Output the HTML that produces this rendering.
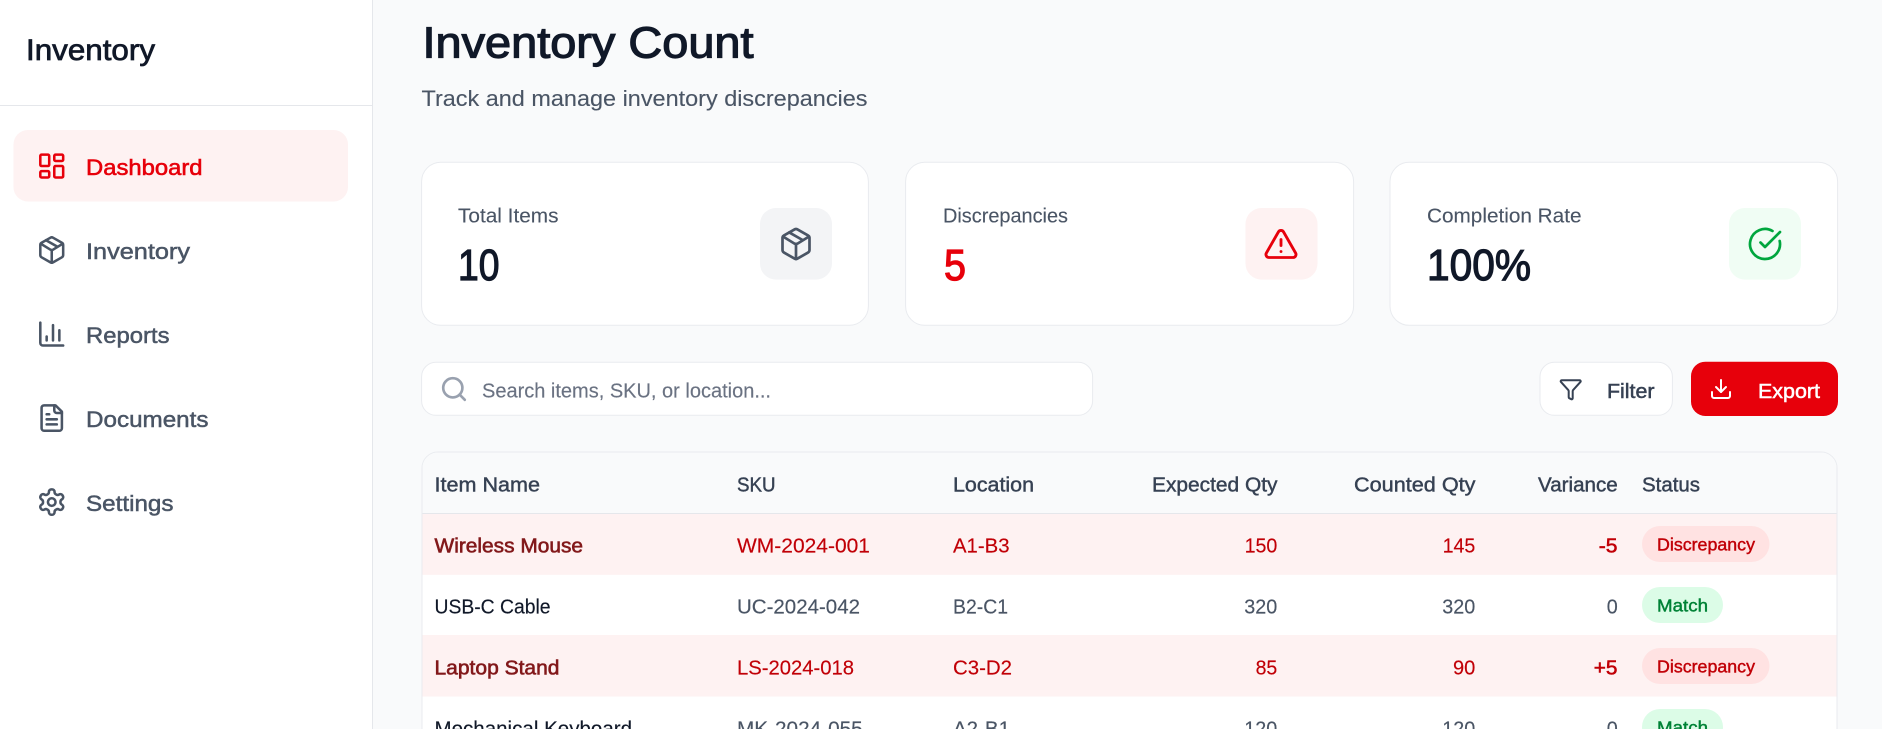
<!DOCTYPE html>
<html lang="en"><head><meta charset="utf-8"><title>Inventory Count</title>
<style>
html,body{margin:0;padding:0;width:1882px;height:729px;overflow:hidden;background:#f9fafb}
svg{display:block}
text{font-family:"Liberation Sans",sans-serif;white-space:pre}
.ic{fill:none;stroke-width:2;stroke-linecap:round;stroke-linejoin:round}
.nav{font-size:22.6px;fill:#4a5565;stroke:#4a5565;stroke-width:.5}
.th{font-size:20.2px;fill:#364153;stroke:#364153;stroke-width:.42}
.td{font-size:20.2px;stroke-width:.15}
.bn{fill:#82181a;stroke:#82181a;stroke-width:.6}
.rd{fill:#c10007;stroke:#c10007}
.gy{fill:#4a5565;stroke:#4a5565}
.dk{fill:#101828;stroke:#101828}
.bd{font-size:17.4px;stroke-width:.42}
.lb{font-size:20.6px;fill:#4a5565;stroke:#4a5565;stroke-width:.12}
.num{font-size:44px;fill:#101828;stroke:#101828;stroke-width:1.2}
</style></head>
<body>
<svg width="1882" height="729" viewBox="0 0 1882 729" xmlns="http://www.w3.org/2000/svg">
<rect width="1882" height="729" fill="#f9fafb"/>
<!-- sidebar -->
<rect x="0" y="0" width="372" height="729" fill="#fff"/>
<rect x="372" y="0" width="1" height="729" fill="#e5e7eb"/>
<rect x="0" y="105" width="372" height="1" fill="#e5e7eb"/>
<text x="26" y="60" font-size="29.5" fill="#101828" stroke="#101828" stroke-width=".75" textLength="129" lengthAdjust="spacingAndGlyphs">Inventory</text>
<rect x="13.5" y="130" width="334.5" height="71.5" rx="14.4" fill="#fef2f2"/>
<g class="ic" stroke="#e7000b" transform="translate(36.5 150.8) scale(1.27)"><rect width="7" height="9" x="3" y="3" rx="1"/><rect width="7" height="5" x="14" y="3" rx="1"/><rect width="7" height="9" x="14" y="12" rx="1"/><rect width="7" height="5" x="3" y="16" rx="1"/></g>
<text x="86" y="175" font-size="22.6" fill="#e7000b" stroke="#e7000b" stroke-width=".6" textLength="116.5" lengthAdjust="spacingAndGlyphs">Dashboard</text>
<g class="ic" stroke="#4a5565" transform="translate(36.5 234.8) scale(1.27)"><path d="M11 21.73a2 2 0 0 0 2 0l7-4A2 2 0 0 0 21 16V8a2 2 0 0 0-1-1.73l-7-4a2 2 0 0 0-2 0l-7 4A2 2 0 0 0 3 8v8a2 2 0 0 0 1 1.73z"/><path d="M12 22V12"/><path d="m3.3 7 7.703 4.734a2 2 0 0 0 1.994 0L20.7 7"/><path d="m7.5 4.27 9 5.15"/></g>
<text class="nav" x="86" y="259" textLength="104" lengthAdjust="spacingAndGlyphs">Inventory</text>
<g class="ic" stroke="#4a5565" transform="translate(36.5 318.8) scale(1.27)"><path d="M3 3v16a2 2 0 0 0 2 2h16"/><path d="M18 17V9"/><path d="M13 17V5"/><path d="M8 17v-3"/></g>
<text class="nav" x="86" y="343" textLength="83.5" lengthAdjust="spacingAndGlyphs">Reports</text>
<g class="ic" stroke="#4a5565" transform="translate(36.5 402.8) scale(1.27)"><path d="M15 2H6a2 2 0 0 0-2 2v16a2 2 0 0 0 2 2h12a2 2 0 0 0 2-2V7Z"/><path d="M14 2v4a2 2 0 0 0 2 2h4"/><path d="M10 9H8"/><path d="M16 13H8"/><path d="M16 17H8"/></g>
<text class="nav" x="86" y="427" textLength="122.5" lengthAdjust="spacingAndGlyphs">Documents</text>
<g class="ic" stroke="#4a5565" transform="translate(36.5 486.8) scale(1.27)"><path d="M12.22 2h-.44a2 2 0 0 0-2 2v.18a2 2 0 0 1-1 1.73l-.43.25a2 2 0 0 1-2 0l-.15-.08a2 2 0 0 0-2.73.73l-.22.38a2 2 0 0 0 .73 2.73l.15.1a2 2 0 0 1 1 1.72v.51a2 2 0 0 1-1 1.74l-.15.09a2 2 0 0 0-.73 2.73l.22.38a2 2 0 0 0 2.73.73l.15-.08a2 2 0 0 1 2 0l.43.25a2 2 0 0 1 1 1.73V20a2 2 0 0 0 2 2h.44a2 2 0 0 0 2-2v-.18a2 2 0 0 1 1-1.73l.43-.25a2 2 0 0 1 2 0l.15.08a2 2 0 0 0 2.73-.73l.22-.39a2 2 0 0 0-.73-2.73l-.15-.08a2 2 0 0 1-1-1.74v-.5a2 2 0 0 1 1-1.74l.15-.09a2 2 0 0 0 .73-2.73l-.22-.38a2 2 0 0 0-2.73-.73l-.15.08a2 2 0 0 1-2 0l-.43-.25a2 2 0 0 1-1-1.73V4a2 2 0 0 0-2-2z"/><circle cx="12" cy="12" r="3"/></g>
<text class="nav" x="86" y="511" textLength="87.5" lengthAdjust="spacingAndGlyphs">Settings</text>
<!-- header -->
<text x="422.5" y="57.5" font-size="44" fill="#101828" stroke="#101828" stroke-width="1.2" textLength="331" lengthAdjust="spacingAndGlyphs">Inventory Count</text>
<text x="421.5" y="106" font-size="22.6" fill="#4a5565" stroke="#4a5565" stroke-width=".12" textLength="446" lengthAdjust="spacingAndGlyphs">Track and manage inventory discrepancies</text>
<!-- cards -->
<rect x="421.6" y="162.3" width="446.8" height="163" rx="19.2" fill="#fff" stroke="#e9ebef" stroke-width="1"/>
<text class="lb" x="458" y="222.7" textLength="100.5" lengthAdjust="spacingAndGlyphs">Total Items</text>
<text class="num" x="458" y="280" textLength="41.5" lengthAdjust="spacingAndGlyphs">10</text>
<rect x="760" y="208" width="72" height="71.6" rx="16" fill="#f3f4f6"/>
<g class="ic" stroke="#4a5565" transform="translate(778 226) scale(1.5)" style="stroke-width:1.8"><path d="M11 21.73a2 2 0 0 0 2 0l7-4A2 2 0 0 0 21 16V8a2 2 0 0 0-1-1.73l-7-4a2 2 0 0 0-2 0l-7 4A2 2 0 0 0 3 8v8a2 2 0 0 0 1 1.73z"/><path d="M12 22V12"/><path d="m3.3 7 7.703 4.734a2 2 0 0 0 1.994 0L20.7 7"/><path d="m7.5 4.27 9 5.15"/></g>
<rect x="905.6" y="162.3" width="448" height="163" rx="19.2" fill="#fff" stroke="#e9ebef" stroke-width="1"/>
<text class="lb" x="943" y="222.7" textLength="125" lengthAdjust="spacingAndGlyphs">Discrepancies</text>
<text class="num" x="944" y="280" style="fill:#e7000b;stroke:#e7000b" textLength="22" lengthAdjust="spacingAndGlyphs">5</text>
<rect x="1245.5" y="208" width="72" height="71.6" rx="16" fill="#fef2f2"/>
<g class="ic" stroke="#e7000b" transform="translate(1263 226) scale(1.5)" style="stroke-width:1.9"><path d="m21.73 18-8-14a2 2 0 0 0-3.48 0l-8 14A2 2 0 0 0 4 21h16a2 2 0 0 0 1.73-3"/><path d="M12 9v4"/><path d="M12 17h.01"/></g>
<rect x="1390" y="162.3" width="447.6" height="163" rx="19.2" fill="#fff" stroke="#e9ebef" stroke-width="1"/>
<text class="lb" x="1427" y="222.7" textLength="154.5" lengthAdjust="spacingAndGlyphs">Completion Rate</text>
<text class="num" x="1427" y="280" textLength="104" lengthAdjust="spacingAndGlyphs">100%</text>
<rect x="1729" y="208" width="72" height="71.6" rx="16" fill="#f0fdf4"/>
<g class="ic" stroke="#00a63e" transform="translate(1747 226) scale(1.5)" style="stroke-width:1.8"><path d="M21.801 10A10 10 0 1 1 17 3.335"/><path d="m9 11 3 3L22 4"/></g>
<!-- toolbar -->
<rect x="421.6" y="362.3" width="671" height="53" rx="14.4" fill="#fff" stroke="#e9ebef" stroke-width="1"/>
<g class="ic" stroke="#99a1af" transform="translate(439.6 374.6) scale(1.2)" style="stroke-width:2.2"><path d="m21 21-4.34-4.34"/><circle cx="11" cy="11" r="8"/></g>
<text x="482" y="397.5" font-size="20" fill="#6a7282" stroke="#6a7282" stroke-width=".15" textLength="289" lengthAdjust="spacingAndGlyphs">Search items, SKU, or location...</text>
<rect x="1540" y="362.3" width="132.4" height="53" rx="14.4" fill="#fff" stroke="#e9ebef" stroke-width="1"/>
<g class="ic" stroke="#364153" transform="translate(1558.7 377.3)"><path d="M10 20a1 1 0 0 0 .553.895l2 1A1 1 0 0 0 14 21v-7a2 2 0 0 1 .517-1.341L21.74 4.67A1 1 0 0 0 21 3H3a1 1 0 0 0-.742 1.67l7.225 7.989A2 2 0 0 1 10 14z"/></g>
<text x="1607" y="398" font-size="20.2" fill="#364153" stroke="#364153" stroke-width=".5" textLength="47.5" lengthAdjust="spacingAndGlyphs">Filter</text>
<rect x="1691" y="361.7" width="147" height="54.3" rx="14.4" fill="#e7000b"/>
<g class="ic" stroke="#fff" transform="translate(1709 377)"><path d="M12 15V3"/><path d="M21 15v4a2 2 0 0 1-2 2H5a2 2 0 0 1-2-2v-4"/><path d="m7 10 5 5 5-5"/></g>
<text x="1758" y="398" font-size="20.2" fill="#fff" stroke="#fff" stroke-width=".5" textLength="62" lengthAdjust="spacingAndGlyphs">Export</text>
<!-- table -->
<path d="M422 760V468a16 16 0 0 1 16-16H1821a16 16 0 0 1 16 16V760Z" fill="#fff" stroke="#e9ebef" stroke-width="1"/>
<path d="M422.5 513V468a15.5 15.5 0 0 1 15.5-15.5H1821a15.5 15.5 0 0 1 15.5 15.5V513Z" fill="#f9fafb"/>
<rect x="422.5" y="513" width="1414" height="1.1" fill="#e5e7eb"/>
<rect x="422.5" y="514.1" width="1414" height="60.7" fill="#fef2f2"/>
<rect x="422.5" y="635" width="1414" height="61.6" fill="#fef2f2"/>
<text class="th" x="434.5" y="491.7" textLength="105.5" lengthAdjust="spacingAndGlyphs">Item Name</text>
<text class="th" x="737" y="491.7" textLength="38.5" lengthAdjust="spacingAndGlyphs">SKU</text>
<text class="th" x="953" y="491.7" textLength="81" lengthAdjust="spacingAndGlyphs">Location</text>
<text class="th" x="1152" y="491.7" textLength="125.5" lengthAdjust="spacingAndGlyphs">Expected Qty</text>
<text class="th" x="1354" y="491.7" textLength="121.5" lengthAdjust="spacingAndGlyphs">Counted Qty</text>
<text class="th" x="1538" y="491.7" textLength="79.7" lengthAdjust="spacingAndGlyphs">Variance</text>
<text class="th" x="1642" y="491.7" textLength="58" lengthAdjust="spacingAndGlyphs">Status</text>
<!-- row 1 -->
<text class="td bn" x="434.5" y="552.6" textLength="148.5" lengthAdjust="spacingAndGlyphs">Wireless Mouse</text>
<text class="td rd" x="737" y="552.6" textLength="133" lengthAdjust="spacingAndGlyphs">WM-2024-001</text>
<text class="td rd" x="953" y="552.6" textLength="56.5" lengthAdjust="spacingAndGlyphs">A1-B3</text>
<text class="td rd" x="1244.6" y="552.6" textLength="32.7" lengthAdjust="spacingAndGlyphs">150</text>
<text class="td rd" x="1442.6" y="552.6" textLength="32.7" lengthAdjust="spacingAndGlyphs">145</text>
<text class="td rd" x="1598.8" y="552.6" style="stroke-width:.55" textLength="18.7" lengthAdjust="spacingAndGlyphs">-5</text>
<rect x="1642" y="526" width="127.5" height="36" rx="18" fill="#ffe2e2"/>
<text class="bd rd" x="1657" y="550.7" textLength="98" lengthAdjust="spacingAndGlyphs">Discrepancy</text>
<!-- row 2 -->
<text class="td dk" x="434.5" y="613.6" textLength="116" lengthAdjust="spacingAndGlyphs">USB-C Cable</text>
<text class="td gy" x="737" y="613.6" textLength="123" lengthAdjust="spacingAndGlyphs">UC-2024-042</text>
<text class="td gy" x="953" y="613.6" textLength="55" lengthAdjust="spacingAndGlyphs">B2-C1</text>
<text class="td gy" x="1244.3" y="613.6" textLength="33" lengthAdjust="spacingAndGlyphs">320</text>
<text class="td gy" x="1442.3" y="613.6" textLength="33" lengthAdjust="spacingAndGlyphs">320</text>
<text class="td gy" x="1606.7" y="613.6" textLength="11" lengthAdjust="spacingAndGlyphs">0</text>
<rect x="1642" y="587" width="81" height="36" rx="18" fill="#dcfce7"/>
<text class="bd" x="1657" y="611.7" fill="#008236" stroke="#008236" textLength="51" lengthAdjust="spacingAndGlyphs">Match</text>
<!-- row 3 -->
<text class="td bn" x="434.5" y="674.6" textLength="125" lengthAdjust="spacingAndGlyphs">Laptop Stand</text>
<text class="td rd" x="737" y="674.6" textLength="117" lengthAdjust="spacingAndGlyphs">LS-2024-018</text>
<text class="td rd" x="953" y="674.6" textLength="59" lengthAdjust="spacingAndGlyphs">C3-D2</text>
<text class="td rd" x="1255.6" y="674.6" textLength="21.7" lengthAdjust="spacingAndGlyphs">85</text>
<text class="td rd" x="1453" y="674.6" textLength="22.3" lengthAdjust="spacingAndGlyphs">90</text>
<text class="td rd" x="1593.8" y="674.6" style="stroke-width:.55" textLength="23.7" lengthAdjust="spacingAndGlyphs">+5</text>
<rect x="1642" y="648" width="127.5" height="36" rx="18" fill="#ffe2e2"/>
<text class="bd rd" x="1657" y="672.7" textLength="98" lengthAdjust="spacingAndGlyphs">Discrepancy</text>
<!-- row 4 -->
<text class="td dk" x="434.5" y="735.6" textLength="197.5" lengthAdjust="spacingAndGlyphs">Mechanical Keyboard</text>
<text class="td gy" x="737" y="735.6" textLength="125.7" lengthAdjust="spacingAndGlyphs">MK-2024-055</text>
<text class="td gy" x="953" y="735.6" textLength="57" lengthAdjust="spacingAndGlyphs">A2-B1</text>
<text class="td gy" x="1244.3" y="735.6" textLength="33" lengthAdjust="spacingAndGlyphs">120</text>
<text class="td gy" x="1442.3" y="735.6" textLength="33" lengthAdjust="spacingAndGlyphs">120</text>
<text class="td gy" x="1606.7" y="735.6" textLength="11" lengthAdjust="spacingAndGlyphs">0</text>
<rect x="1642" y="709" width="81" height="36" rx="18" fill="#dcfce7"/>
<text class="bd" x="1657" y="733.7" fill="#008236" stroke="#008236" textLength="51" lengthAdjust="spacingAndGlyphs">Match</text>
</svg>
</body></html>
